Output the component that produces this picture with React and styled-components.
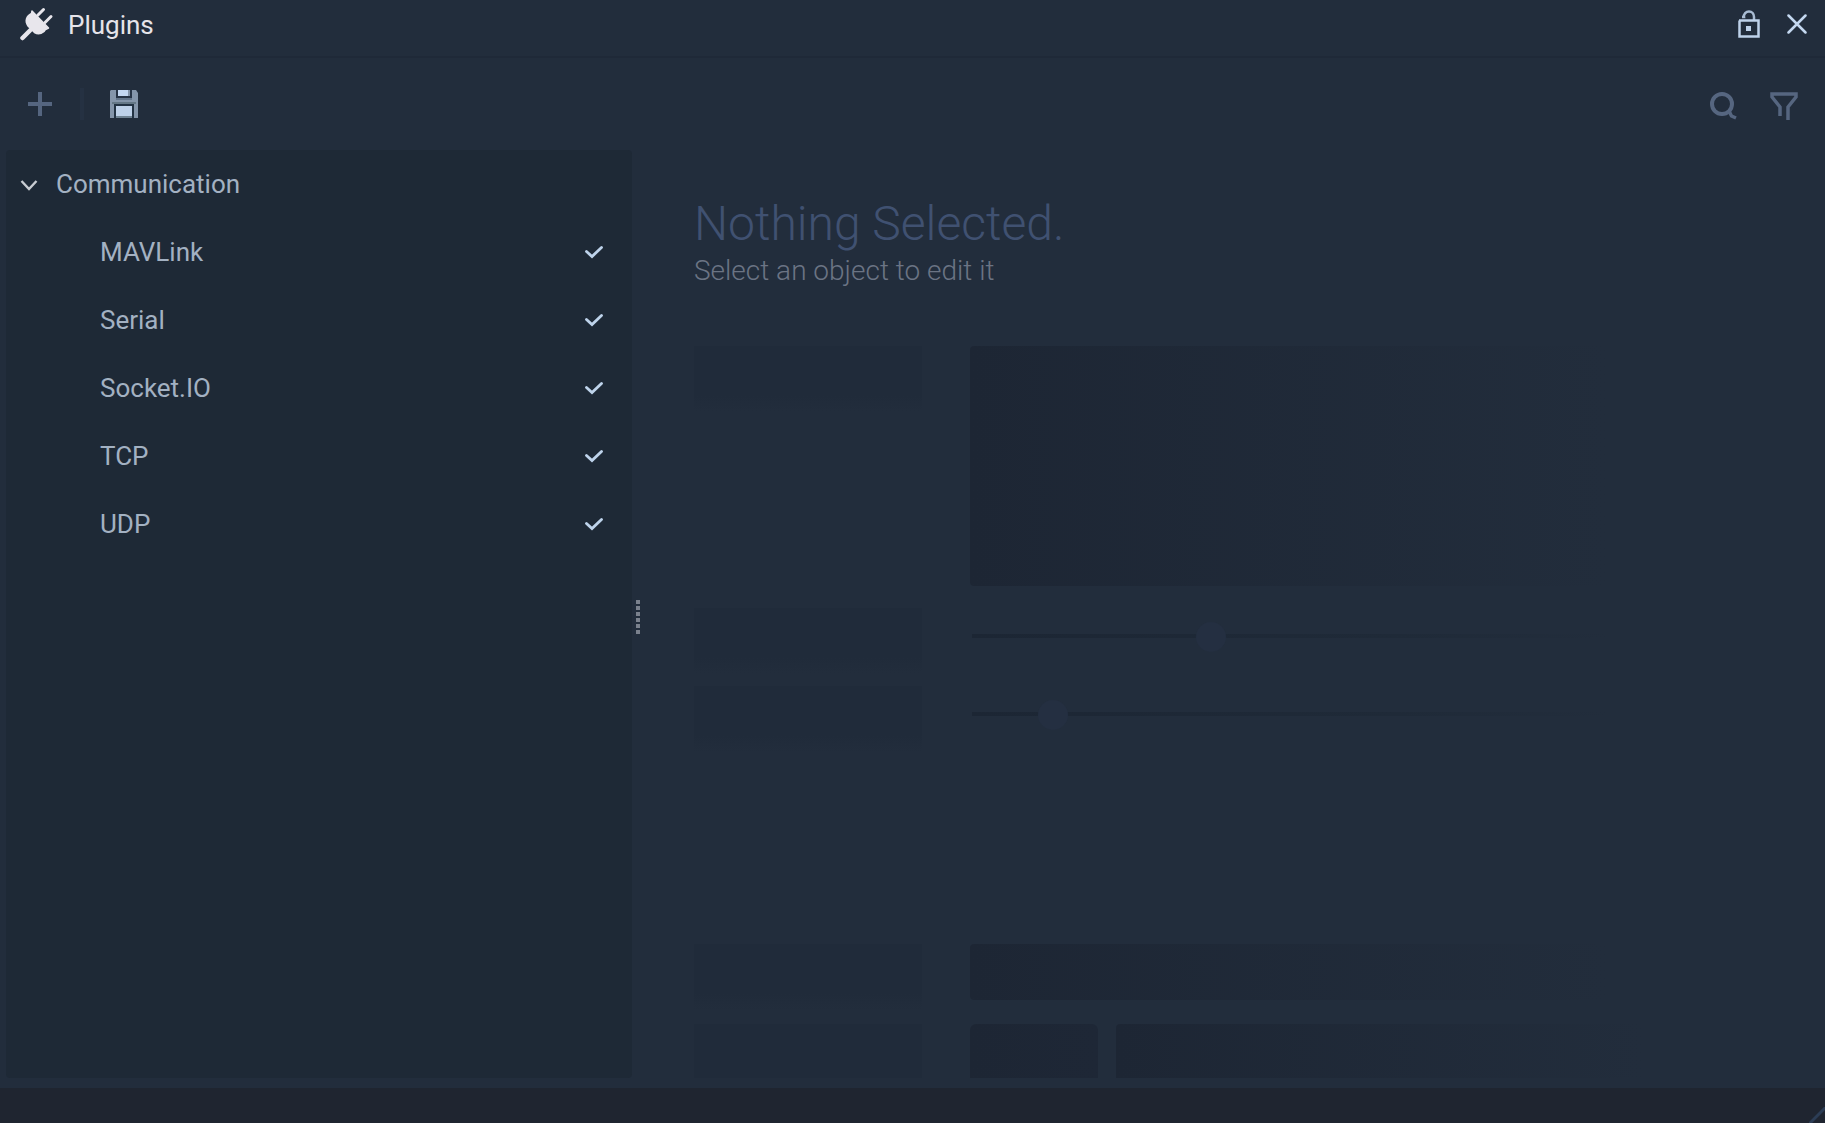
import React, { useState } from "react";
import styled, { createGlobalStyle } from "styled-components";

const Global = createGlobalStyle`
  * { box-sizing: border-box; }
  body {
    margin: 0;
    background: #222d3c;
    color: #a3b1c2;
    font-family: Roboto, "Liberation Sans", sans-serif;
    font-size: 26px;
  }
`;

const Window = styled.div`
  display: flex;
  flex-direction: column;
  min-height: 100vh;
`;

const TitleBar = styled.header`
  display: flex;
  align-items: center;
  height: 58px;
  padding: 0 12px 8px 20px;
  border-bottom: 2px solid #1f2938;
`;

const Title = styled.h1`
  flex: 1;
  margin: 0;
  padding: 2px 0 0 14px;
  font-size: 26px;
  font-weight: 400;
  line-height: 32px;
  color: #e6e4ea;
`;

const IconButton = styled.button`
  display: grid;
  place-items: center;
  width: 32px;
  height: 32px;
  margin-left: ${(p) => p.$gap || 0}px;
  padding: 0;
  border: 0;
  background: none;
  cursor: pointer;
`;

const Toolbar = styled.div`
  display: flex;
  align-items: center;
  height: 92px;
  padding: 0 25px 0 24px;
`;

const Divider = styled.span`
  width: 4px;
  height: 32px;
  margin-left: 24px;
  background: #253142;
`;

const FindTools = styled.div`
  display: flex;
  margin-left: auto;
  padding-top: 4px;
`;

const Body = styled.main`
  flex: 1;
  display: flex;
  padding: 0 6px 10px;
`;

const Tree = styled.nav`
  width: 626px;
  background: #1e2936;
  border-radius: 4px;
`;

const GroupButton = styled.button`
  display: flex;
  align-items: center;
  gap: 18px;
  width: 100%;
  height: 68px;
  padding: 0 14px;
  border: 0;
  background: none;
  color: inherit;
  font: inherit;
  text-align: left;
  cursor: pointer;
`;

const PluginList = styled.ul`
  margin: 0;
  padding: 0;
  list-style: none;
`;

const PluginRow = styled.label`
  display: flex;
  align-items: center;
  justify-content: space-between;
  height: 68px;
  padding: 0 29px 0 94px;
  cursor: pointer;
`;

const HiddenCheck = styled.input`
  position: absolute;
  opacity: 0;
`;

const Splitter = styled.div`
  display: flex;
  flex-direction: column;
  align-items: center;
  justify-content: center;
  gap: 2px;
  width: 12px;
  padding-top: 6px;
  cursor: col-resize;
`;

const Grip = styled.span`
  width: 4px;
  height: 4px;
  background: #7a818d;
`;

const Details = styled.section`
  flex: 1;
  display: flex;
  flex-direction: column;
  padding: 44px 0 0 50px;
`;

const Heading = styled.h2`
  margin: 0;
  font-size: 48px;
  font-weight: 300;
  line-height: 60px;
  color: #405171;
`;

const Hint = styled.p`
  margin: 0;
  font-size: 28px;
  font-weight: 300;
  line-height: 34px;
  color: #6b7484;
`;

const Skeleton = styled.div`
  flex: 1;
  display: grid;
  grid-template-columns: 228px 1fr;
  grid-template-rows: 262px 78px 258px 80px 1fr;
  column-gap: 48px;
  align-items: start;
  margin-top: 58px;
`;

const Label = styled.div`
  height: ${(p) => (p.$cut ? "54px" : "66px")};
  background: ${(p) => (p.$cut ? "#202b3a" : "linear-gradient(#202b3a 75%, #222d3c)")};
`;

const FieldRow = styled.div`
  display: flex;
  gap: 18px;
  height: ${(p) => p.$height}px;
`;

const Field = styled.div`
  flex: 1;
  border-radius: ${(p) => (p.$cut ? "4px 4px 0 0" : "4px")};
  background: linear-gradient(90deg, #1d2634, #222d3c 75%);
`;

const Swatch = styled.div`
  width: 128px;
  border-radius: 6px 6px 0 0;
  background: linear-gradient(90deg, #1d2634, #1e2736);
`;

const Slider = styled.input`
  appearance: none;
  width: 100%;
  height: 30px;
  margin: 14px 0 0;
  background: linear-gradient(90deg, #1c2634, #1f2a38 50%, #222d3c 75%) 2px 12px / 100% 4px no-repeat;

  &::-webkit-slider-thumb {
    appearance: none;
    width: 30px;
    height: 30px;
    border: 0;
    border-radius: 50%;
    background: #242f41;
  }
`;

const StatusBar = styled.footer`
  display: flex;
  align-items: flex-end;
  justify-content: flex-end;
  height: 35px;
  background: #1f2530;
`;

const plugins = ["MAVLink", "Serial", "Socket.IO", "TCP", "UDP"];

const PlugIcon = () => (
  <svg width="34" height="34" viewBox="0 0 34 34" fill="#e8e6ec" stroke="#e8e6ec" strokeLinecap="round">
    <path d="M2.500 31 10 23.500" strokeWidth="4.500" />
    <path d="M18 8 23.500 2.500M25 15.500 31 9.500" strokeWidth="3" />
    <path d="M12 4 28.500 21 25.500 22.500C24 26 19 28 14.500 25.500L8 19C4.500 14 6.500 9 11.500 6.500Z" strokeWidth="1.500" strokeLinejoin="round" />
  </svg>
);

const UnlockIcon = () => (
  <svg width="22" height="28" viewBox="0 0 22 28" fill="none" stroke="#bed2ea" strokeWidth="2">
    <path d="M4 7H6C5.500 4 8 1.500 11 1.500C14 1.500 16 4 16 7V10" strokeWidth="2.500" stroke="#a9bcd3" />
    <path d="M1 10.500H20.500V26.500H1.500V10.500" strokeWidth="2.500" />
    <path d="M8 16H13V21H8Z" fill="#bed2ea" stroke="none" />
  </svg>
);

const CloseIcon = () => (
  <svg width="20" height="20" viewBox="0 0 20 20" stroke="#c4d8f0" strokeWidth="2.500" strokeLinecap="round">
    <path d="M1.500 1.500 18.500 18.500M18.500 1.500 1.500 18.500" />
  </svg>
);

const PlusIcon = () => (
  <svg width="24" height="24" viewBox="0 0 24 24">
    <path d="M10 0H14V10H24V14H14V24H10V14H0V10H10Z" fill="#55657f" />
  </svg>
);

const SaveIcon = () => (
  <svg width="28" height="28" viewBox="0 0 28 28">
    <path d="M0 1 1 0H26L28 3V28H0Z" fill="#8495aa" />
    <path d="M6 0H22V9H6Z" fill="#263345" />
    <path d="M8 0H18V6H8Z" fill="#c3d7f1" />
    <path d="M18 0H20V6H18Z" fill="#8495aa" />
    <path d="M6 8H22V10H6Z" fill="#63758a" />
    <path d="M2 12H26V14H2Z" fill="#647786" />
    <path d="M4 14H24V28H4Z" fill="#233344" />
    <path d="M6 16H22V26H6Z" fill="#bed1e9" />
    <path d="M6 26H22V28H6Z" fill="#6f8292" />
  </svg>
);

const SearchIcon = () => (
  <svg width="28" height="28" viewBox="0 0 28 28" fill="none" stroke="#566680" strokeWidth="4">
    <circle cx="12" cy="12" r="10" />
    <path d="M19 19 21.500 24 26 26" strokeWidth="3.500" />
  </svg>
);

const FilterIcon = () => (
  <svg width="28" height="28" viewBox="0 0 28 28" fill="none" stroke="#566680">
    <path d="M10 24V15L2 5V2H26V5L18 15V28" strokeWidth="3.500" />
  </svg>
);

const ChevronIcon = () => (
  <svg width="18" height="14" viewBox="0 0 18 14" fill="none" stroke="#c8ccd2" strokeWidth="2.400">
    <path d="M1.500 4 9 12 16.500 4" />
  </svg>
);

const CheckIcon = () => (
  <svg width="18" height="13" viewBox="0 0 18 13" fill="none" stroke="#bed3eb" strokeWidth="2.800" strokeLinecap="round">
    <path d="M1.500 5.500 7 10.500 16.500 1.500" />
  </svg>
);

const ResizeIcon = () => (
  <svg width="16" height="16" viewBox="0 0 16 16" stroke="#2c3d55" strokeWidth="3">
    <path d="M0 17 17 0" />
  </svg>
);

function Plugin({ name }) {
  const [enabled, setEnabled] = useState(true);
  return (
    <li>
      <PluginRow>
        {name}
        <HiddenCheck type="checkbox" checked={enabled} onChange={() => setEnabled(!enabled)} />
        {enabled && <CheckIcon />}
      </PluginRow>
    </li>
  );
}

function EmptyForm() {
  return (
    <Skeleton>
      <Label />
      <FieldRow $height={240}><Field /></FieldRow>
      <Label />
      <Slider type="range" aria-label="First placeholder" max="1000" defaultValue="276" disabled />
      <Label />
      <Slider type="range" aria-label="Second placeholder" max="1000" defaultValue="83" disabled />
      <Label />
      <FieldRow $height={56}><Field /></FieldRow>
      <Label $cut />
      <FieldRow $height={54}>
        <Swatch />
        <Field $cut />
      </FieldRow>
    </Skeleton>
  );
}

export default function App() {
  const [open, setOpen] = useState(true);
  return (
    <Window>
      <Global />
      <TitleBar>
        <PlugIcon />
        <Title>Plugins</Title>
        <IconButton aria-label="Unlock"><UnlockIcon /></IconButton>
        <IconButton aria-label="Close" $gap={16}><CloseIcon /></IconButton>
      </TitleBar>
      <Toolbar>
        <IconButton aria-label="Add"><PlusIcon /></IconButton>
        <Divider />
        <IconButton aria-label="Save" $gap={24}><SaveIcon /></IconButton>
        <FindTools>
          <IconButton aria-label="Search"><SearchIcon /></IconButton>
          <IconButton aria-label="Filter" $gap={28}><FilterIcon /></IconButton>
        </FindTools>
      </Toolbar>
      <Body>
        <Tree>
          <GroupButton aria-expanded={open} onClick={() => setOpen(!open)}>
            <ChevronIcon />
            Communication
          </GroupButton>
          {open && (
            <PluginList>
              {plugins.map((name) => <Plugin key={name} name={name} />)}
            </PluginList>
          )}
        </Tree>
        <Splitter>
          {[0, 1, 2, 3, 4, 5].map((n) => <Grip key={n} />)}
        </Splitter>
        <Details>
          <Heading>Nothing Selected.</Heading>
          <Hint>Select an object to edit it</Hint>
          <EmptyForm />
        </Details>
      </Body>
      <StatusBar><ResizeIcon /></StatusBar>
    </Window>
  );
}
